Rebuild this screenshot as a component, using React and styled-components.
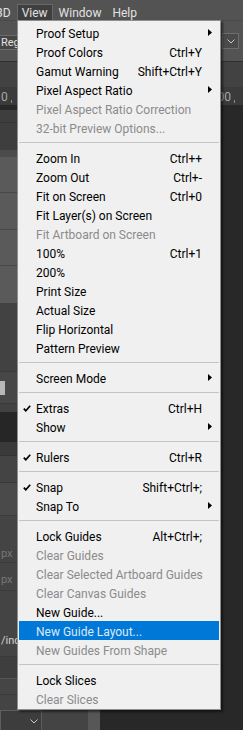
import React from 'react';
import styled, { createGlobalStyle, css } from 'styled-components';

const GlobalStyle = createGlobalStyle`
  html, body { margin: 0; padding: 0; background: #282828; }
  * { box-sizing: border-box; }
`;

const Screen = styled.div`
  position: relative;
  width: 243px;
  height: 730px;
  overflow: hidden;
  display: flex;
  flex-direction: column;
  background: #282828;
  font-family: Roboto, "Noto Sans", sans-serif;
`;

/* ---------- app menu bar ---------- */
const MenuBar = styled.div`
  flex: none;
  height: 20px;
  background: #535353;
  display: flex;
  align-items: flex-end;
  gap: 1px;
`;

const MenuTitle = styled.div`
  height: 16px;
  padding: 0 4px;
  display: flex;
  align-items: center;
  font-size: 12px;
  color: #e2e2e2;
  white-space: nowrap;
  border: 1px solid transparent;
  border-bottom: 0;
  margin-left: ${(p) => p.$offset || 0}px;
  ${(p) =>
    p.$active &&
    css`
      background: #3f3f3f;
      border-color: #676767;
    `}
`;

/* ---------- options bar ---------- */
const OptionsBar = styled.div`
  flex: none;
  height: 42px;
  background: #535353;
  border-top: 1px solid #494949;
  border-bottom: 1px solid #2f2f2f;
  display: flex;
  align-items: center;
  justify-content: space-between;
`;

const FontSelect = styled.div`
  margin-left: -3px;
  margin-top: 2px;
  width: 80px;
  height: 15px;
  padding-left: 3px;
  border: 1px solid #6c6c6c;
  background: #454545;
  color: #e0e0e0;
  font-size: 11px;
  display: flex;
  align-items: center;
`;

const DropBox = styled.div`
  margin-right: 4px;
  width: 17px;
  height: 16px;
  border: 1px solid #6c6c6c;
  background: #4a4a4a;
  display: flex;
  align-items: center;
  justify-content: center;
`;

/* ---------- document tabs + ruler ---------- */
const TabBar = styled.div`
  flex: none;
  height: 25px;
  background: #424242;
`;

const Ruler = styled.div`
  flex: none;
  height: 18px;
  background: #3b3b3b;
  display: flex;
  align-items: flex-end;
  justify-content: space-between;
  padding: 0 8px 1px 1px;
  color: #a4a8ad;
  font-size: 12px;
  line-height: 14px;
`;

const RulerMark = styled.div`
  display: flex;
  align-items: flex-end;
  gap: 3px;
`;

const Tick = styled.span`
  width: 1px;
  height: 3px;
  margin-bottom: 1px;
  background: #8a8a8a;
`;

/* ---------- workspace ---------- */
const Workspace = styled.div`
  flex: 1;
  min-height: 0;
  display: flex;
  background: #282828;
`;

const Panel = styled.div`
  margin-top: 5px;
  width: 100px;
  display: flex;
  background: #424242;
`;

const PanelBody = styled.div`
  width: 88px;
  display: flex;
  flex-direction: column;
`;

const PanelScroll = styled.div`
  width: 12px;
  background: #575757;
`;

const PanelTitle = styled.div`
  height: 13px;
  background: #3e3e3e;
  border-bottom: 1px solid #343434;
`;

const PanelTabs = styled.div`
  height: 27px;
  background: #3e3e3e;
`;

const PanelStrip = styled.div`
  height: ${(p) => p.$h}px;
  background: ${(p) => p.$bg || '#424242'};
  border-bottom: ${(p) => (p.$line ? `1px solid ${p.$line}` : '0')};
`;

const LayerRow = styled.div`
  height: 36.5px;
  background: #5a5a5a;
  border-bottom: 1px solid #474747;
  &:last-child {
    border-bottom: 0;
  }
`;

const ToolRow = styled.div`
  height: 33px;
  background: #474747;
  border-top: 1px solid #3a3a3a;
  border-bottom: 1px solid #3a3a3a;
  display: flex;
  align-items: center;
`;

const Chip = styled.div`
  width: 5px;
  height: 14px;
  background: #b8b8b8;
`;

const DarkField = styled.div`
  height: 30px;
  background: #262626;
`;

const PropRow = styled.div`
  height: ${(p) => p.$h}px;
  background: #444444;
  border-bottom: 1px solid #3a3a3a;
  display: flex;
  align-items: flex-end;
  padding: 0 0 ${(p) => p.$pb || 2}px 1px;
  font-size: 11px;
  line-height: 13px;
  color: ${(p) => (p.$bright ? '#d4d4d4' : '#777777')};
`;

const PanelFoot = styled.div`
  flex: 1;
  background: #444444;
  padding-top: 15px;
`;

const FootSelect = styled.div`
  width: 42px;
  height: 20px;
  border: 1px solid #5e5e5e;
  border-bottom: 0;
  background: #3d3d3d;
  display: flex;
  justify-content: flex-end;
  padding: 8px 3px 0 0;
`;

/* ---------- dropdown menu ---------- */
const Menu = styled.div`
  position: absolute;
  top: 20px;
  left: 17px;
  width: 204px;
  z-index: 10;
  background: #f0f0f0;
  border: 1px solid #8f8f8f;
  padding: 2px 1px 1px;
  box-shadow: 2px 2px 2px rgba(0, 0, 0, 0.5);
  font-family: Roboto, "Noto Sans", sans-serif;
  font-size: 12px;
`;

const Item = styled.div`
  display: grid;
  grid-template-columns: 17px 1fr auto 17px;
  align-items: center;
  height: 19px;
  padding-top: 2px;
  white-space: nowrap;
  color: ${(p) => (p.$disabled ? '#8b8b8b' : '#000000')};
  ${(p) =>
    p.$hot &&
    css`
      background: #0078d7;
      color: #dde8f6;
    `}
`;

const CheckCell = styled.span`
  display: flex;
  padding-left: 4px;
`;

const Label = styled.span`
  line-height: 14px;
`;

const Shortcut = styled.span`
  line-height: 14px;
  text-align: right;
`;

const ArrowCell = styled.span`
  display: flex;
  padding-left: 6px;
  margin-top: -2px;
`;

const Separator = styled.div`
  height: 1px;
  margin: 5px 0;
  background: #c4c4c4;
`;

const Check = () => (
  <svg width="8" height="7" viewBox="0 0 8 7">
    <path d="M0.8 3.6 L2.8 5.8 L7.2 0.8" fill="none" stroke="#000" strokeWidth="1.7" />
  </svg>
);

const SubArrow = () => (
  <svg width="4" height="7" viewBox="0 0 4 7">
    <polygon points="0,0 4,3.5 0,7" fill="#000" />
  </svg>
);

const Chevron = () => (
  <svg width="8" height="5" viewBox="0 0 8 5">
    <path d="M0.5 0.5 L4 4 L7.5 0.5" fill="none" stroke="#c8c8c8" strokeWidth="1" />
  </svg>
);

const groups = [
  [
    { label: 'Proof Setup', sub: true },
    { label: 'Proof Colors', key: 'Ctrl+Y' },
    { label: 'Gamut Warning', key: 'Shift+Ctrl+Y' },
    { label: 'Pixel Aspect Ratio', sub: true },
    { label: 'Pixel Aspect Ratio Correction', disabled: true },
    { label: '32-bit Preview Options...', disabled: true },
  ],
  [
    { label: 'Zoom In', key: 'Ctrl++' },
    { label: 'Zoom Out', key: 'Ctrl+-' },
    { label: 'Fit on Screen', key: 'Ctrl+0' },
    { label: 'Fit Layer(s) on Screen' },
    { label: 'Fit Artboard on Screen', disabled: true },
    { label: '100%', key: 'Ctrl+1' },
    { label: '200%' },
    { label: 'Print Size' },
    { label: 'Actual Size' },
    { label: 'Flip Horizontal' },
    { label: 'Pattern Preview' },
  ],
  [{ label: 'Screen Mode', sub: true }],
  [
    { label: 'Extras', key: 'Ctrl+H', checked: true },
    { label: 'Show', sub: true },
  ],
  [{ label: 'Rulers', key: 'Ctrl+R', checked: true }],
  [
    { label: 'Snap', key: 'Shift+Ctrl+;', checked: true },
    { label: 'Snap To', sub: true },
  ],
  [
    { label: 'Lock Guides', key: 'Alt+Ctrl+;' },
    { label: 'Clear Guides', disabled: true },
    { label: 'Clear Selected Artboard Guides', disabled: true },
    { label: 'Clear Canvas Guides', disabled: true },
    { label: 'New Guide...' },
    { label: 'New Guide Layout...', hot: true },
    { label: 'New Guides From Shape', disabled: true },
  ],
  [
    { label: 'Lock Slices' },
    { label: 'Clear Slices', disabled: true },
  ],
];

export default function App() {
  return (
    <>
      <GlobalStyle />
      <Screen>
        <MenuBar>
          <MenuTitle $offset={-9}>3D</MenuTitle>
          <MenuTitle $active>View</MenuTitle>
          <MenuTitle>Window</MenuTitle>
          <MenuTitle>Help</MenuTitle>
        </MenuBar>

        <OptionsBar>
          <FontSelect>Regular</FontSelect>
          <DropBox>
            <Chevron />
          </DropBox>
        </OptionsBar>

        <TabBar />

        <Ruler>
          <RulerMark>
            <span>0</span>
            <Tick />
          </RulerMark>
          <RulerMark>
            <span>200</span>
            <Tick />
          </RulerMark>
        </Ruler>

        <Workspace>
          <Panel>
            <PanelBody>
              <PanelTitle />
              <PanelTabs />
              <PanelStrip $h={7} $bg="#4b4b4b" />
              <div>
                <LayerRow />
                <LayerRow />
                <LayerRow />
                <LayerRow />
              </div>
              <PanelStrip $h={69} $bg="#424242" />
              <ToolRow>
                <Chip />
              </ToolRow>
              <PanelStrip $h={8} $bg="#424242" />
              <DarkField />
              <PanelStrip $h={14} $bg="#3a3a3a" $line="#333333" />
              <PanelStrip $h={28} $bg="#444444" $line="#3a3a3a" />
              <PanelStrip $h={33} $bg="#4a4a4a" $line="#3a3a3a" />
              <PropRow $h={47}>px</PropRow>
              <PropRow $h={28} $pb={4}>px</PropRow>
              <PropRow $h={67} $pb={9} $bright>/inch</PropRow>
              <PanelStrip $h={22} $bg="#3e3e3e" $line="#555555" />
              <PanelStrip $h={16} $bg="#454545" $line="#3a3a3a" />
              <PanelFoot>
                <FootSelect>
                  <Chevron />
                </FootSelect>
              </PanelFoot>
            </PanelBody>
            <PanelScroll />
          </Panel>
        </Workspace>

        <Menu>
          {groups.map((group, gi) => (
            <React.Fragment key={gi}>
              {gi > 0 && <Separator />}
              {group.map((it) => (
                <Item key={it.label} $disabled={it.disabled} $hot={it.hot}>
                  <CheckCell>{it.checked && <Check />}</CheckCell>
                  <Label>{it.label}</Label>
                  <Shortcut>{it.key || ''}</Shortcut>
                  <ArrowCell>{it.sub && <SubArrow />}</ArrowCell>
                </Item>
              ))}
            </React.Fragment>
          ))}
        </Menu>
      </Screen>
    </>
  );
}
